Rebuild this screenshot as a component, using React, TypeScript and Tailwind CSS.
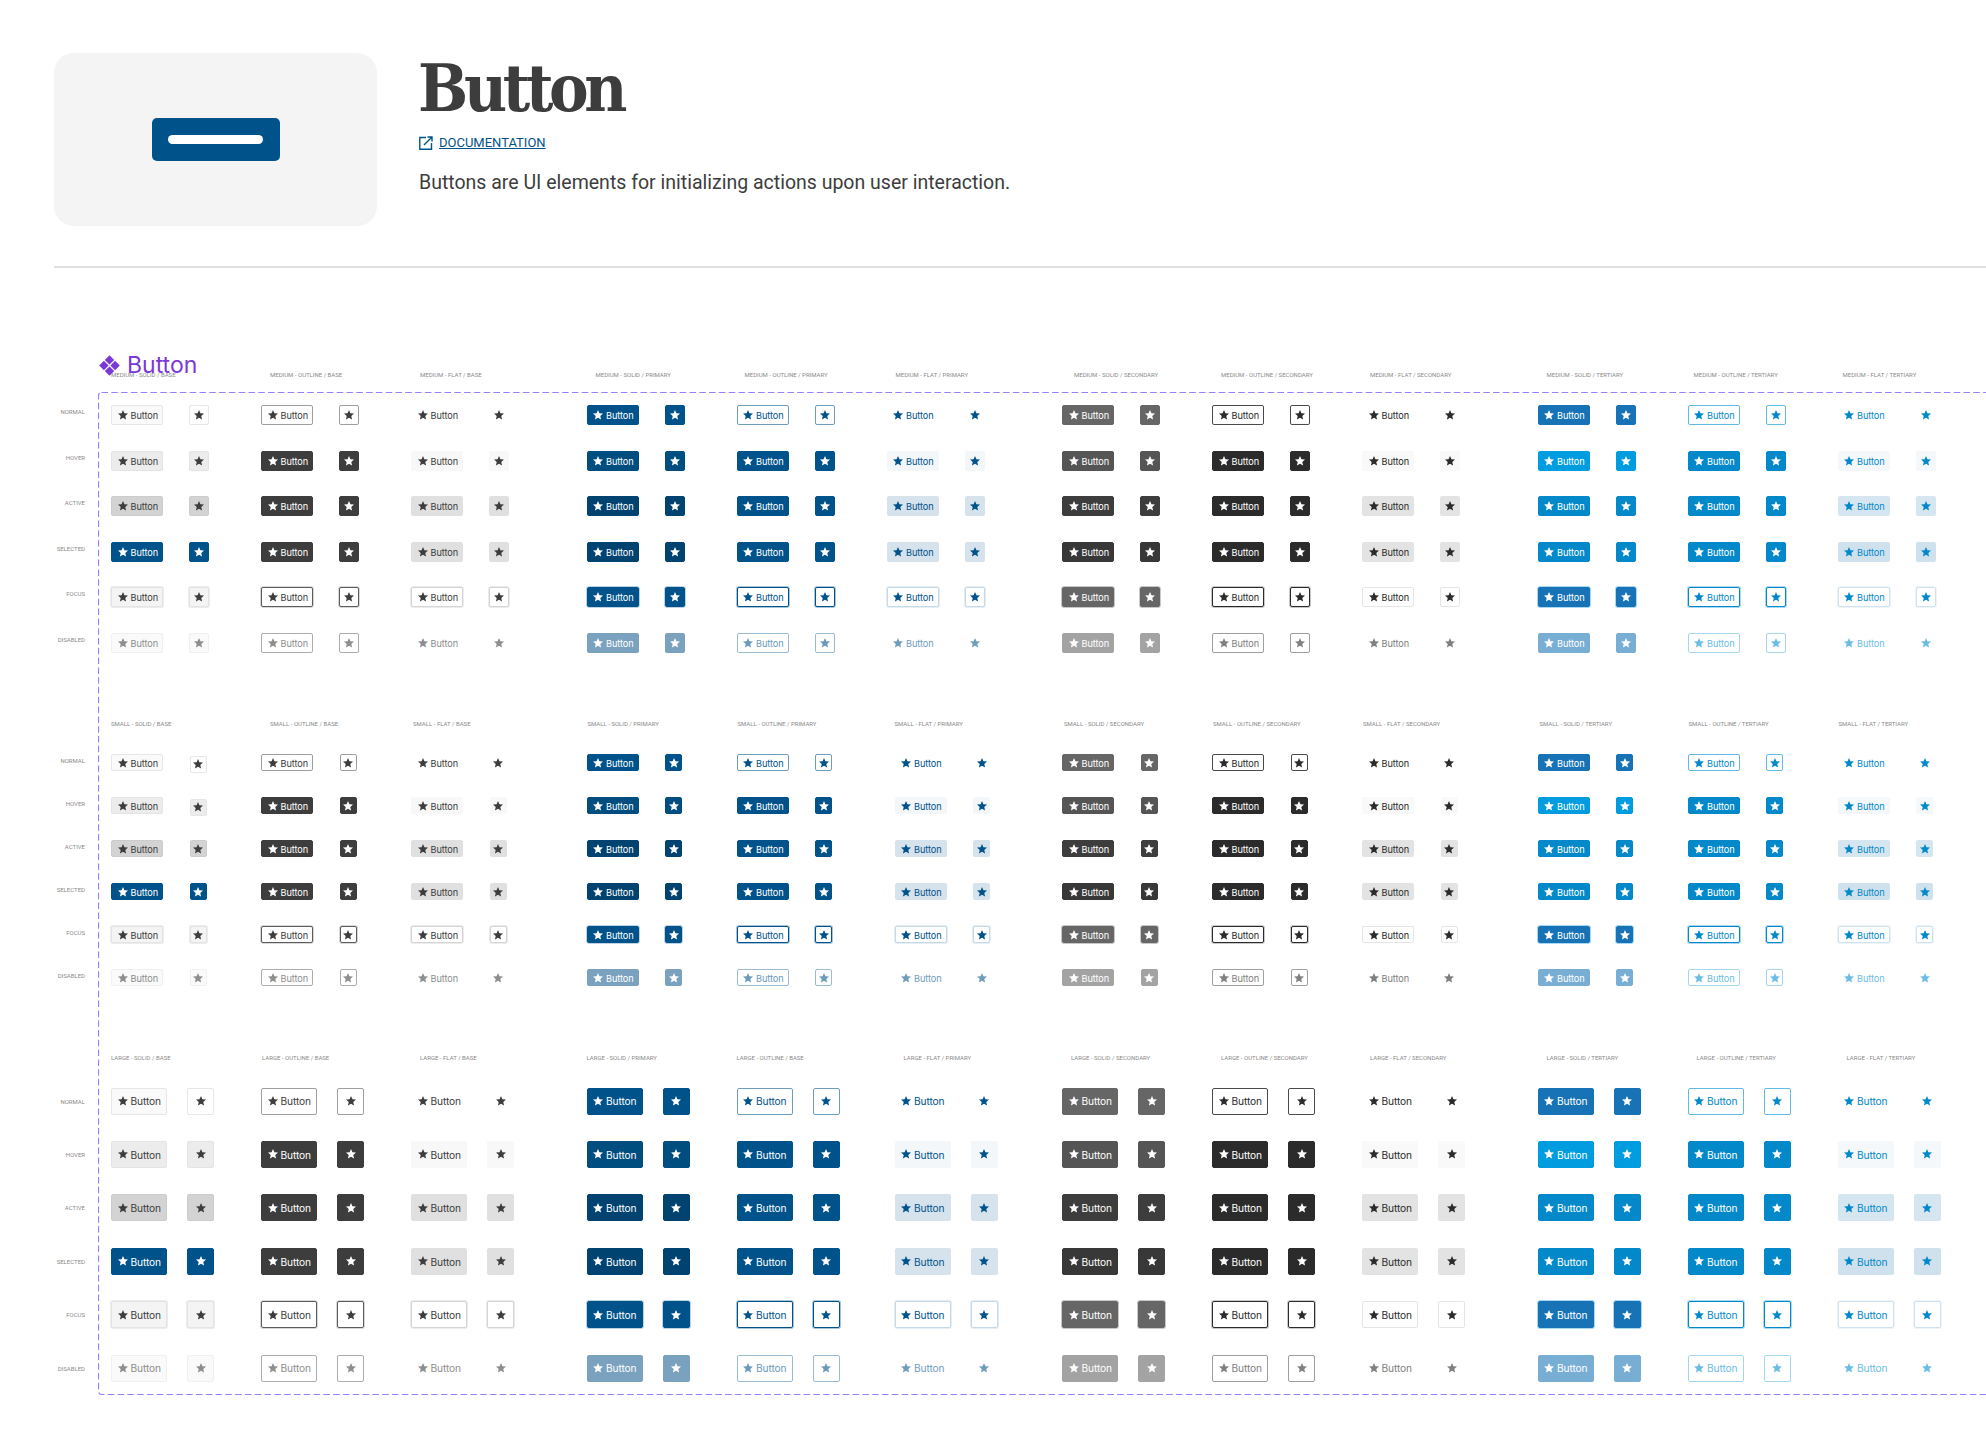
const STATES = ['NORMAL', 'HOVER', 'ACTIVE', 'SELECTED', 'FOCUS', 'DISABLED']

// one entry per column, one class string per state
const COLUMNS: string[][] = [
  // solid / base
  [
    'bg-[#fafafa] border-[#e6e6e6] text-[#3d3d3d]',
    'bg-[#ececec] border-[#e4e4e4] text-[#3d3d3d]',
    'bg-[#d3d3d3] border-[#cccccc] text-[#3d3d3d]',
    'bg-[#00538a] border-[#00538a] text-white',
    'bg-[#f4f4f4] border-[#e4e4e4] text-[#3d3d3d] shadow-[0_0_0_1px_#ececec]',
    'bg-[#fafafa] border-[#f0f0f0] text-[#8e8e8e]',
  ],
  // outline / base
  [
    'bg-white border-[#9e9e9e] text-[#3d3d3d]',
    'bg-[#3d3d3d] border-[#3d3d3d] text-white',
    'bg-[#3d3d3d] border-[#3d3d3d] text-white',
    'bg-[#3d3d3d] border-[#3d3d3d] text-white',
    'bg-white border-[#5c5c5c] text-[#3d3d3d] shadow-[0_0_0_1px_#d8d8d8]',
    'bg-white border-[#adadad] text-[#8e8e8e]',
  ],
  // flat / base
  [
    'bg-white border-white text-[#3d3d3d]',
    'bg-[#f8f8f8] border-[#f8f8f8] text-[#3d3d3d]',
    'bg-[#e0e0e0] border-[#e0e0e0] text-[#3d3d3d]',
    'bg-[#e0e0e0] border-[#e0e0e0] text-[#3d3d3d]',
    'bg-white border-[#d4d4d4] text-[#3d3d3d] shadow-[0_0_0_1px_#ececec]',
    'bg-white border-white text-[#8e8e8e]',
  ],
  // solid / primary
  [
    'bg-[#00538a] border-[#00538a] text-white',
    'bg-[#004d80] border-[#004d80] text-white',
    'bg-[#004370] border-[#004370] text-white',
    'bg-[#004370] border-[#004370] text-white',
    'bg-[#00538a] border-[#00538a] text-white shadow-[0_0_0_1px_#bcd3e3]',
    'bg-[#7aa2be] border-[#7aa2be] text-white',
  ],
  // outline / primary
  [
    'bg-white border-[#6f9dbc] text-[#00538a]',
    'bg-[#00538a] border-[#00538a] text-white',
    'bg-[#00538a] border-[#00538a] text-white',
    'bg-[#00538a] border-[#00538a] text-white',
    'bg-white border-[#00538a] text-[#00538a] shadow-[0_0_0_1px_#a9c5d9]',
    'bg-white border-[#9bbbd2] text-[#6b9aba]',
  ],
  // flat / primary
  [
    'bg-white border-white text-[#00538a]',
    'bg-[#f3f7fa] border-[#f3f7fa] text-[#00538a]',
    'bg-[#d6e2ec] border-[#d6e2ec] text-[#00538a]',
    'bg-[#d6e2ec] border-[#d6e2ec] text-[#00538a]',
    'bg-white border-[#c5d8e5] text-[#00538a] shadow-[0_0_0_1px_#e6eff5]',
    'bg-white border-white text-[#6f9dbc]',
  ],
  // solid / secondary
  [
    'bg-[#666666] border-[#666666] text-white',
    'bg-[#555555] border-[#555555] text-white',
    'bg-[#3d3d3d] border-[#3d3d3d] text-white',
    'bg-[#383838] border-[#383838] text-white',
    'bg-[#666666] border-[#666666] text-white shadow-[0_0_0_1px_#c8c8c8]',
    'bg-[#a3a3a3] border-[#a3a3a3] text-white',
  ],
  // outline / secondary
  [
    'bg-white border-[#4a4a4a] text-[#2b2b2b]',
    'bg-[#2b2b2b] border-[#2b2b2b] text-white',
    'bg-[#2b2b2b] border-[#2b2b2b] text-white',
    'bg-[#2b2b2b] border-[#2b2b2b] text-white',
    'bg-white border-[#2b2b2b] text-[#2b2b2b] shadow-[0_0_0_1px_#c8c8c8]',
    'bg-white border-[#9e9e9e] text-[#808080]',
  ],
  // flat / secondary
  [
    'bg-white border-white text-[#2b2b2b]',
    'bg-[#f9f9f9] border-[#f9f9f9] text-[#2b2b2b]',
    'bg-[#e3e3e3] border-[#e3e3e3] text-[#2b2b2b]',
    'bg-[#e3e3e3] border-[#e3e3e3] text-[#2b2b2b]',
    'bg-white border-[#e5e5e5] text-[#2b2b2b]',
    'bg-white border-white text-[#808080]',
  ],
  // solid / tertiary
  [
    'bg-[#1773b5] border-[#1773b5] text-white',
    'bg-[#009ce0] border-[#009ce0] text-white',
    'bg-[#0389ca] border-[#0389ca] text-white',
    'bg-[#0389ca] border-[#0389ca] text-white',
    'bg-[#1773b5] border-[#1773b5] text-white shadow-[0_0_0_1px_#a9d8f2]',
    'bg-[#79aed4] border-[#79aed4] text-white',
  ],
  // outline / tertiary
  [
    'bg-white border-[#61b9e6] text-[#0389ca]',
    'bg-[#0389ca] border-[#0389ca] text-white',
    'bg-[#0389ca] border-[#0389ca] text-white',
    'bg-[#0389ca] border-[#0389ca] text-white',
    'bg-white border-[#0389ca] text-[#0389ca] shadow-[0_0_0_1px_#a9d8f2]',
    'bg-white border-[#a5d6ef] text-[#6cbde6]',
  ],
  // flat / tertiary
  [
    'bg-white border-white text-[#0389ca]',
    'bg-[#f4f8fb] border-[#f4f8fb] text-[#0389ca]',
    'bg-[#d6e6f0] border-[#d6e6f0] text-[#0389ca]',
    'bg-[#cfe1ec] border-[#cfe1ec] text-[#0389ca]',
    'bg-white border-[#cfe2ee] text-[#0389ca] shadow-[0_0_0_1px_#eef5f9]',
    'bg-white border-white text-[#6cbde6]',
  ],
]

interface Section {
  name: string
  titles: string[]
  titleOffsets: string[]
  cellOffsets: string[]
  rowHeight: string
  labelTop: string
  wide: string
  icon: string
  iconGap: string
}

const NO_OFFSET = Array(12).fill('')
const SHIFTED_PRIMARY_FLAT = NO_OFFSET.map((v, i) => (i === 5 ? 'pl-[8px]' : v))

const SECTIONS: Section[] = [
  {
    name: 'MEDIUM',
    titles: ['SOLID / BASE', 'OUTLINE / BASE', 'FLAT / BASE', 'SOLID / PRIMARY', 'OUTLINE / PRIMARY', 'FLAT / PRIMARY', 'SOLID / SECONDARY', 'OUTLINE / SECONDARY', 'FLAT / SECONDARY', 'SOLID / TERTIARY', 'OUTLINE / TERTIARY', 'FLAT / TERTIARY'],
    titleOffsets: ['pl-0', 'pl-[9px]', 'pl-[9px]', 'pl-[9px]', 'pl-[8px]', 'pl-[9px]', 'pl-[12px]', 'pl-[9px]', 'pl-[8px]', 'pl-[9px]', 'pl-[6px]', 'pl-[5px]'],
    cellOffsets: NO_OFFSET,
    rowHeight: 'h-[45.6px]',
    labelTop: 'mt-[2px]',
    wide: 'w-[52px] h-[20px] text-[9.2px]',
    icon: 'w-[20px] h-[20px]',
    iconGap: 'ml-[26px]',
  },
  {
    name: 'SMALL',
    titles: ['SOLID / BASE', 'OUTLINE / BASE', 'FLAT / BASE', 'SOLID / PRIMARY', 'OUTLINE / PRIMARY', 'FLAT / PRIMARY', 'SOLID / SECONDARY', 'OUTLINE / SECONDARY', 'FLAT / SECONDARY', 'SOLID / TERTIARY', 'OUTLINE / TERTIARY', 'FLAT / TERTIARY'],
    titleOffsets: ['pl-0', 'pl-[9px]', 'pl-[2px]', 'pl-px', 'pl-px', 'pl-[8px]', 'pl-[2px]', 'pl-px', 'pl-px', 'pl-[2px]', 'pl-px', 'pl-px'],
    cellOffsets: SHIFTED_PRIMARY_FLAT,
    rowHeight: 'h-[43px]',
    labelTop: 'mt-[2px]',
    wide: 'w-[52px] h-[17px] text-[9.2px]',
    icon: 'w-[17px] h-[17px]',
    iconGap: 'ml-[26.5px]',
  },
  {
    name: 'LARGE',
    titles: ['SOLID / BASE', 'OUTLINE / BASE', 'FLAT / BASE', 'SOLID / PRIMARY', 'OUTLINE / BASE', 'FLAT / PRIMARY', 'SOLID / SECONDARY', 'OUTLINE / SECONDARY', 'FLAT / SECONDARY', 'SOLID / TERTIARY', 'OUTLINE / TERTIARY', 'FLAT / TERTIARY'],
    titleOffsets: ['pl-0', 'pl-px', 'pl-[9px]', 'pl-0', 'pl-0', 'pl-[17px]', 'pl-[9px]', 'pl-[9px]', 'pl-[8px]', 'pl-[9px]', 'pl-[9px]', 'pl-[9px]'],
    cellOffsets: SHIFTED_PRIMARY_FLAT,
    rowHeight: 'h-[53.4px]',
    labelTop: 'mt-[9px]',
    wide: 'w-[56px] h-[27px] text-[10.2px]',
    icon: 'w-[27px] h-[27px]',
    iconGap: 'ml-[20px]',
  },
]

function Star() {
  return (
    <svg viewBox="0 0 24 24" className="w-[12px] h-[12px] shrink-0" fill="currentColor">
      <path d="M12 17.27L18.18 21l-1.64-7.03L22 9.24l-7.19-.61L12 2 9.19 8.63 2 9.24l5.46 4.73L5.82 21z" />
    </svg>
  )
}

function Group({ items }: { items: React.ReactNode[] }) {
  const groups = [items.slice(0, 3), items.slice(3, 6), items.slice(6, 9), items.slice(9, 12)]
  return (
    <div className="flex gap-[25.5px] ml-[26px]">
      {groups.map((g, i) => (
        <div key={i} className="flex">{g}</div>
      ))}
    </div>
  )
}

function ButtonSection({ section }: { section: Section }) {
  return (
    <div className="mb-[40.5px]">
      <div className="flex h-[35px]">
        <div className="w-[85px] shrink-0" />
        <Group
          items={section.titles.map((t, i) => (
            <div key={i} className={`w-[150px] h-[10px] leading-[10px] text-[6px] text-[#8a8a8a] whitespace-nowrap ${section.titleOffsets[i]}`}>
              {section.name} - {t}
            </div>
          ))}
        />
      </div>
      {STATES.map((state, row) => (
        <div key={state} className={`flex ${section.rowHeight}`}>
          <div className={`w-[85px] shrink-0 h-[10px] leading-[10px] text-right text-[6px] text-[#8a8a8a] ${section.labelTop}`}>{state}</div>
          <Group
            items={COLUMNS.map((col, i) => {
              const nudged = section.name === 'SMALL' && i === 0 && row < 2
              return (
                <div key={i} className={`w-[150px] flex items-start ${section.cellOffsets[i]}`}>
                  <div className={`flex items-center pl-[4.5px] gap-[2px] rounded-[2px] border font-normal font-['Inter'] tracking-[-0.1px] ${section.wide} ${col[row]}`}>
                    <Star />
                    <span className="pt-[2px]">Button</span>
                  </div>
                  <div className={`flex items-center justify-center rounded-[2px] border ${section.icon} ${section.iconGap} ${nudged ? 'mt-[1.5px]' : ''} ${i === 0 && row === 0 ? 'bg-white' : ''} ${col[row]}`}>
                    <Star />
                  </div>
                </div>
              )
            })}
          />
        </div>
      ))}
    </div>
  )
}

export default function App() {
  return (
    <div className="w-[1986px] h-[1432px] overflow-hidden bg-white font-['Roboto']">
      <header className="flex pt-[53px] pl-[54px] gap-[42px]">
        <div className="w-[323px] h-[173px] rounded-[20px] bg-[#f4f4f4] flex items-center justify-center">
          <div className="w-[128px] h-[43px] rounded-[5px] bg-[#00538a] flex items-center justify-center">
            <div className="w-[95px] h-[9px] rounded-full bg-white" />
          </div>
        </div>
        <div>
          <h1 className="mt-[-3px] ml-[-1px] h-[76px] leading-[76px] text-[66px] font-bold text-[#3d3d3d] tracking-[-4.3px] font-['DejaVu_Serif_Condensed','DejaVu_Serif',serif]">Button</h1>
          <a className="mt-[9px] flex items-center gap-[6px] h-[16px] text-[13px] text-[#00538a] underline">
            <svg viewBox="0 0 14 14" className="w-[14px] h-[14px]" fill="none" stroke="currentColor" strokeWidth="1.4">
              <path d="M7 1.5H.8v11.7h11.7V7" />
              <path d="M5 9L12.5 1.5M8.5 1h4.5v4.5" />
            </svg>
            DOCUMENTATION
          </a>
          <p className="mt-[20px] text-[19.5px] leading-[24px] text-[#3d3d3d]">Buttons are UI elements for initializing actions upon user interaction.</p>
        </div>
      </header>

      <div className="ml-[54px] mt-[40px] h-[2px] bg-[#e0e0e0]" />

      <div className="relative mt-[102px]">
        {/* figma component set frame and its name, under the column titles */}
        <svg className="absolute left-[98px] top-[22px] w-[1900px] h-[1004px]" fill="none">
          <rect x="0.5" y="0.5" width="1950" height="1002" rx="3" stroke="#9b7dff" strokeWidth="1.2" strokeDasharray="6.5 3.3" />
        </svg>
        <div className="absolute left-[99px] top-[-17px] flex items-center gap-[7px] text-[#7b38d8]">
          <svg viewBox="0 0 21 21" className="w-[21px] h-[21px]" fill="currentColor">
            <path d="M10.5.2l4.7 4.7-4.7 4.7-4.7-4.7zM4.9 5.8l4.7 4.7-4.7 4.7L.2 10.5zM16.1 5.8l4.7 4.7-4.7 4.7-4.7-4.7zM10.5 11.4l4.7 4.7-4.7 4.7-4.7-4.7z" />
          </svg>
          <span className="text-[23px] leading-[24px] font-['Inter']">Button</span>
        </div>
        <div className="relative">
          {SECTIONS.map(s => <ButtonSection key={s.name} section={s} />)}
        </div>
      </div>
    </div>
  )
}
